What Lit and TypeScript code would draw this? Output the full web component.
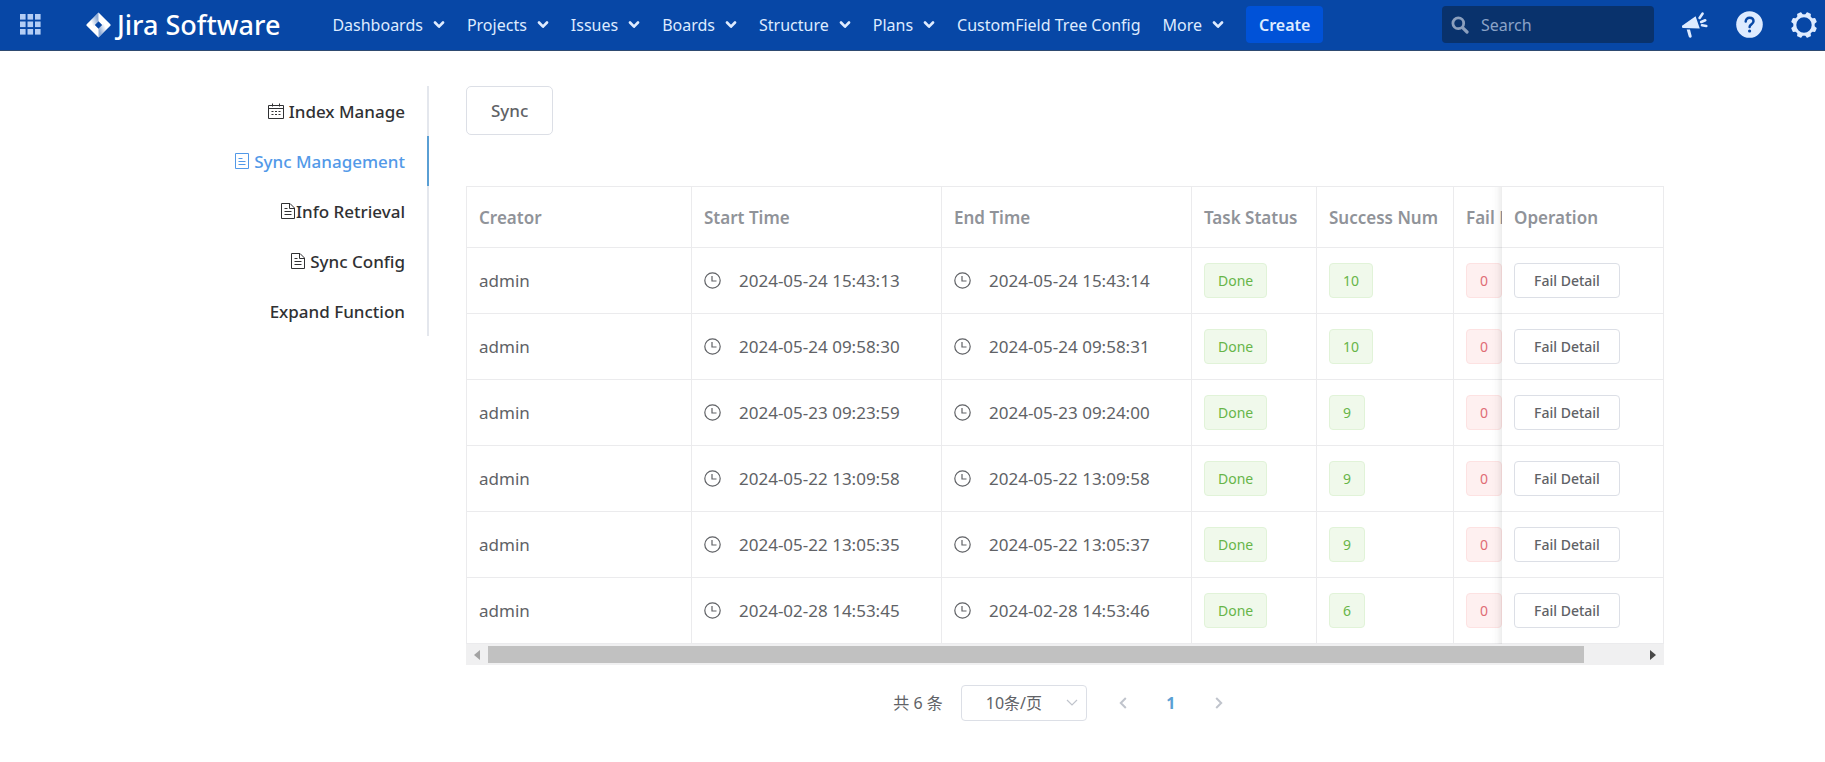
import { LitElement, html, css, svg } from "lit";
import { customElement, query } from "lit/decorators.js";

const FONT = css`"Noto Sans", "Noto Sans CJK SC", sans-serif`;

interface MenuItem {
  label: string;
  menu: boolean;
}

interface Task {
  creator: string;
  start: string;
  end: string;
  success: number;
  fail: number;
}

const MENU: MenuItem[] = [
  { label: "Dashboards", menu: true },
  { label: "Projects", menu: true },
  { label: "Issues", menu: true },
  { label: "Boards", menu: true },
  { label: "Structure", menu: true },
  { label: "Plans", menu: true },
  { label: "CustomField Tree Config", menu: false },
  { label: "More", menu: true },
];

const TASKS: Task[] = [
  { creator: "admin", start: "2024-05-24 15:43:13", end: "2024-05-24 15:43:14", success: 10, fail: 0 },
  { creator: "admin", start: "2024-05-24 09:58:30", end: "2024-05-24 09:58:31", success: 10, fail: 0 },
  { creator: "admin", start: "2024-05-23 09:23:59", end: "2024-05-23 09:24:00", success: 9, fail: 0 },
  { creator: "admin", start: "2024-05-22 13:09:58", end: "2024-05-22 13:09:58", success: 9, fail: 0 },
  { creator: "admin", start: "2024-05-22 13:05:35", end: "2024-05-22 13:05:37", success: 9, fail: 0 },
  { creator: "admin", start: "2024-02-28 14:53:45", end: "2024-02-28 14:53:46", success: 6, fail: 0 },
];

const chevron = html`<svg class="chevron" width="12" height="8" viewBox="0 0 12 8" aria-hidden="true">
  <path d="M2 1.5 6 5.7 10 1.5" fill="none" stroke="currentColor" stroke-width="2.6" stroke-linecap="round" stroke-linejoin="round" />
</svg>`;

const GRID = [0, 7.5, 15];
const GEAR = [0, 45, 90, 135, 180, 225, 270, 315];

@customElement("top-bar")
export class TopBar extends LitElement {
  static styles = css`
    :host {
      display: block;
      font-family: ${FONT};
    }
    * {
      box-sizing: border-box;
    }
    .bar {
      display: flex;
      align-items: center;
      height: 51px;
      padding: 0 8px 1px 20px;
      background: #0747a6;
      border-bottom: 1px solid #2e4a70;
      color: #deebff;
    }
    button {
      display: inline-flex;
      align-items: center;
      padding: 0;
      border: 0;
      background: none;
      color: inherit;
      font: inherit;
      cursor: pointer;
    }
    .logo {
      display: flex;
      align-items: center;
      gap: 6px;
      margin: 0 52px 0 45px;
      color: #fff;
      font-size: 27px;
      line-height: 32px;
      font-weight: 500;
      text-decoration: none;
      white-space: nowrap;
    }
    .menu {
      display: flex;
      align-items: center;
      gap: 22px;
      font-size: 16px;
      line-height: 24px;
      white-space: nowrap;
    }
    .menu button {
      gap: 10px;
    }
    .create {
      height: 37px;
      margin-left: 22px;
      padding: 0 13px;
      border-radius: 4px;
      background: #0052d8;
      font-size: 16px;
      font-weight: 600;
    }
    .tools {
      display: flex;
      align-items: center;
      gap: 28px;
      margin-left: auto;
    }
    .search {
      display: flex;
      align-items: center;
      gap: 12px;
      width: 212px;
      height: 37px;
      padding: 0 9px;
      border-radius: 4px;
      background: #09326c;
      color: #8b9fbd;
    }
    .search input {
      flex: 1;
      min-width: 0;
      padding: 0;
      border: 0;
      outline: 0;
      background: none;
      color: #deebff;
      font: inherit;
      font-size: 16px;
    }
    .search input::placeholder {
      color: #8ba3c7;
      opacity: 1;
    }
  `;

  render() {
    return html`
      <header class="bar">
        <button aria-label="Applications">
          <svg width="21" height="21" viewBox="0 0 21 21" fill="#b3cdf5">
            ${GRID.map((y) => GRID.map((x) => svg`<rect x=${x} y=${y} width="5.6" height="5.6" />`))}
          </svg>
        </button>
        <a class="logo" href="#">
          <svg width="25" height="26" viewBox="0 0 25 26" aria-hidden="true">
            <defs>
              <linearGradient id="fold-a" x1="0.9" y1="0.3" x2="0.2" y2="0.8">
                <stop offset="0.1" stop-color="#0747a6" stop-opacity="0.45" />
                <stop offset="0.9" stop-color="#0747a6" stop-opacity="0" />
              </linearGradient>
              <linearGradient id="fold-b" x1="0.1" y1="0.7" x2="0.8" y2="0.2">
                <stop offset="0.1" stop-color="#0747a6" stop-opacity="0.45" />
                <stop offset="0.9" stop-color="#0747a6" stop-opacity="0" />
              </linearGradient>
            </defs>
            <path
              d="M12.5.5 24.3 12.200a1.200 1.200 0 0 1 0 1.600L12.500 25.500.7 13.800a1.200 1.200 0 0 1 0-1.600ZM12.500 9.300 8.800 13l3.700 3.700 3.700-3.700Z"
              fill="#fff"
              fill-rule="evenodd"
            />
            <path d="M12.500.5v8.800L6.400 15.400 3.300 9.600Z" fill="url(#fold-a)" />
            <path d="M12.500 25.500v-8.800l6.100-6.100 3.100 5.800Z" fill="url(#fold-b)" />
          </svg>
          Jira Software
        </a>
        <nav class="menu">
          ${MENU.map((m) => html`<button>${m.label}${m.menu ? chevron : ""}</button>`)}
        </nav>
        <button class="create">Create</button>
        <div class="tools">
          <label class="search">
            <svg width="18" height="18" viewBox="0 0 18 18" fill="none" stroke="currentColor" stroke-linecap="round" aria-hidden="true">
              <circle cx="7.3" cy="7.3" r="5.4" stroke-width="2.8" />
              <path d="m11.8 11.8 4.2 4.2" stroke-width="3.2" />
            </svg>
            <input type="text" placeholder="Search" aria-label="Search" />
          </label>
          <button aria-label="Announcements">
            <svg width="26" height="26" viewBox="0 0 26 26" fill="currentColor">
              <path d="M13.6 4.2 17.8 16.4 1.6 15.9a1.2 1.2 0 0 1-.8-2.6Z" />
              <path d="M4.7 17.5 8 17.6 9.6 23.8a1.5 1.5 0 0 1-2.9.8Z" />
              <path d="m17.6 6 2.9-4.3M19.2 10l4-1.7M20 13.2l4.3.8" fill="none" stroke="currentColor" stroke-width="2.6" stroke-linecap="round" />
            </svg>
          </button>
          <button aria-label="Help">
            <svg width="27" height="27" viewBox="0 0 27 27">
              <circle cx="13.5" cy="13.5" r="13.3" fill="currentColor" />
              <path d="M9.7 10.6c0-2.3 1.600-3.900 3.900-3.900s3.900 1.500 3.900 3.600c0 2.900-3.900 3-3.900 5.700" fill="none" stroke="#0747a6" stroke-width="2.5" stroke-linecap="round" />
              <circle cx="13.6" cy="20" r="1.6" fill="#0747a6" />
            </svg>
          </button>
          <button aria-label="Settings">
            <svg width="26" height="26" viewBox="0 0 26 26">
              <circle cx="13" cy="13" r="9.2" fill="none" stroke="currentColor" stroke-width="3" />
              ${GEAR.map((a) => svg`<path d="M9.8 4 10.7.5Q10.800 0 11.300 0H14.700Q15.200 0 15.300.5L16.200 4Z" fill="currentColor" transform="rotate(${a + 22.5} 13 13)" />`)}
            </svg>
          </button>
        </div>
      </header>
    `;
  }
}

const calendarIcon = html`<svg width="16" height="16" viewBox="0 0 16 16" fill="none" stroke="currentColor" aria-hidden="true">
  <path d="M.5 2.5h15v13H.5ZM.5 5.5h15M4.5.5v3M11.5.5v3" />
  <path d="M3.5 8.5h9M3.5 11.5h9" stroke-dasharray="2 1.5" />
</svg>`;
const listIcon = html`<svg width="14" height="16" viewBox="0 0 14 16" fill="none" stroke="currentColor" aria-hidden="true">
  <path d="M.5.5h13v15H.5ZM3.5 5.5h4M3.5 8.5h7M3.5 11.5h7" />
</svg>`;
const docIcon = html`<svg width="14" height="16" viewBox="0 0 14 16" fill="none" stroke="currentColor" aria-hidden="true">
  <path d="M.5.5h8.5l4.5 4.5v10.5H.5ZM8.5.5v5h5M3.5 5.5h3M3.5 8.5h7M3.5 11.5h7" />
</svg>`;

const SIDE = [
  { label: "Index Manage", icon: calendarIcon, tight: false },
  { label: "Sync Management", icon: listIcon, tight: false },
  { label: "Info Retrieval", icon: docIcon, tight: true },
  { label: "Sync Config", icon: docIcon, tight: false },
  { label: "Expand Function", icon: null, tight: false },
];

@customElement("side-tabs")
export class SideTabs extends LitElement {
  static styles = css`
    :host {
      display: block;
      font-family: ${FONT};
    }
    .tabs {
      display: flex;
      flex-direction: column;
    }
    .tab {
      display: flex;
      align-items: center;
      justify-content: flex-end;
      gap: 5px;
      height: 50px;
      padding-right: 22px;
      border-right: 2px solid #e4e7ed;
      color: #303133;
      font-size: 17px;
      font-weight: 500;
      text-decoration: none;
    }
    .tight {
      gap: 1px;
    }
    .active {
      border-right-color: #5a9fd4;
      color: #5299e8;
    }
  `;

  render() {
    return html`<nav class="tabs">
      ${SIDE.map(
        (s, i) =>
          html`<a href="#" class="tab ${i === 1 ? "active" : ""} ${s.tight ? "tight" : ""}">${s.icon}<span>${s.label}</span></a>`
      )}
    </nav>`;
  }
}

const clock = html`<svg width="17" height="17" viewBox="0 0 17 17" fill="none" stroke="currentColor" stroke-width="1.2" aria-hidden="true">
  <circle cx="8.5" cy="8.5" r="7.7" />
  <path d="M8 4v5h4.5" />
</svg>`;

@customElement("task-table")
export class TaskTable extends LitElement {
  @query(".view") view!: HTMLElement;

  static styles = css`
    :host {
      display: block;
      font-family: ${FONT};
    }
    * {
      box-sizing: border-box;
    }
    .view {
      overflow: hidden;
      border: 1px solid #ebebed;
      border-bottom: 0;
    }
    table {
      width: 100%;
      min-width: 1262px;
      table-layout: fixed;
      border-collapse: separate;
      border-spacing: 0;
      color: #606266;
      font-size: 17px;
      line-height: 24px;
    }
    th,
    td {
      height: 66px;
      padding: 0 12px;
      border-right: 1px solid #ebebed;
      border-bottom: 1px solid #ebebed;
      text-align: left;
      white-space: nowrap;
    }
    th {
      height: 61px;
      padding-top: 2px;
      color: #909399;
      font-weight: 600;
    }
    .w-creator {
      width: 225px;
    }
    .w-time {
      width: 250px;
    }
    .w-status {
      width: 125px;
    }
    .w-success {
      width: 137px;
    }
    .w-fail {
      width: 114px;
    }
    .w-op {
      width: 161px;
    }
    .pinned {
      position: sticky;
      right: 0;
      border-right: 0;
      background: #fff;
    }
    .pinned::before {
      content: "";
      position: absolute;
      top: 0;
      bottom: -1px;
      left: -10px;
      width: 10px;
      background: linear-gradient(to left, rgba(0, 0, 0, 0.07), rgba(0, 0, 0, 0.02) 50%, rgba(0, 0, 0, 0));
    }
    .time {
      display: flex;
      align-items: center;
      gap: 18px;
    }
    .tag {
      display: inline-block;
      height: 35px;
      padding: 0 13px;
      border: 1px solid #e1f3d8;
      border-radius: 4px;
      background: #f0f9eb;
      color: #67b548;
      font-size: 14px;
      line-height: 33px;
      vertical-align: middle;
    }
    .danger {
      border-color: #fde2e2;
      background: #fef0f0;
      color: #e06c75;
    }
    .detail {
      display: block;
      width: 106px;
      height: 35px;
      padding: 0;
      border: 1px solid #dcdfe6;
      border-radius: 4px;
      background: #fff;
      color: #606266;
      font: inherit;
      font-size: 14px;
      font-weight: 500;
    }
    .scroll {
      display: flex;
      align-items: center;
      height: 21px;
      background: #f0f0f1;
    }
    .arrow {
      display: flex;
      align-items: center;
      justify-content: center;
      width: 22px;
      height: 21px;
      padding: 0;
      border: 0;
      background: none;
      color: #a3a3a3;
    }
    .next {
      color: #484848;
    }
    .track {
      flex: 1;
    }
    .thumb {
      width: 95%;
      height: 17px;
      background: #c1c1c1;
    }
  `;

  private scrollTable(dx: number) {
    this.view.scrollLeft += dx;
  }

  render() {
    return html`
      <div class="view">
        <table>
          <thead>
            <tr>
              <th class="w-creator">Creator</th>
              <th class="w-time">Start Time</th>
              <th class="w-time">End Time</th>
              <th class="w-status">Task Status</th>
              <th class="w-success">Success Num</th>
              <th class="w-fail">Fail Num</th>
              <th class="w-op pinned">Operation</th>
            </tr>
          </thead>
          <tbody>
            ${TASKS.map(
              (t) => html`<tr>
                <td>${t.creator}</td>
                <td><div class="time">${clock}<span>${t.start}</span></div></td>
                <td><div class="time">${clock}<span>${t.end}</span></div></td>
                <td><span class="tag">Done</span></td>
                <td><span class="tag">${t.success}</span></td>
                <td><span class="tag danger">${t.fail}</span></td>
                <td class="pinned"><button class="detail">Fail Detail</button></td>
              </tr>`
            )}
          </tbody>
        </table>
      </div>
      <div class="scroll">
        <button class="arrow" aria-label="Scroll left" @click=${() => this.scrollTable(-40)}>
          <svg width="6" height="10" viewBox="0 0 6 10"><path d="M6 0v10L0 5Z" fill="currentColor" /></svg>
        </button>
        <div class="track"><div class="thumb"></div></div>
        <button class="arrow next" aria-label="Scroll right" @click=${() => this.scrollTable(40)}>
          <svg width="6" height="10" viewBox="0 0 6 10"><path d="M0 0v10l6-5Z" fill="currentColor" /></svg>
        </button>
      </div>
    `;
  }
}

@customElement("page-nav")
export class PageNav extends LitElement {
  static styles = css`
    :host {
      display: flex;
      align-items: center;
      justify-content: center;
      padding-left: 6px;
      color: #606266;
      font-family: ${FONT};
      font-size: 16px;
      line-height: 24px;
    }
    .size {
      display: grid;
      align-items: center;
      width: 126px;
      height: 36px;
      margin: 0 12px 0 18px;
    }
    .size > * {
      grid-area: 1 / 1;
    }
    select {
      box-sizing: border-box;
      width: 100%;
      height: 100%;
      padding: 0 24px;
      appearance: none;
      border: 1px solid #dcdfe6;
      border-radius: 4px;
      background: #fff;
      color: #606266;
      font: inherit;
    }
    .down {
      justify-self: end;
      margin-right: 9px;
      pointer-events: none;
    }
    .pages {
      display: flex;
    }
    button {
      display: flex;
      align-items: center;
      justify-content: center;
      width: 48px;
      height: 36px;
      padding: 0;
      border: 0;
      background: none;
      color: #c0c4cc;
      font: inherit;
    }
    .current {
      color: #5a9fd4;
      font-weight: 700;
      font-size: 16px;
    }
  `;

  render() {
    return html`
      <span>共 6 条</span>
      <label class="size">
        <select aria-label="条/页">
          <option>10条/页</option>
        </select>
        <svg class="down" width="12" height="8" viewBox="0 0 12 8"><path d="m1 1 5 5 5-5" fill="none" stroke="#c0c4cc" stroke-width="1.2" /></svg>
      </label>
      <div class="pages">
        <button aria-label="Previous page">
          <svg width="8" height="12" viewBox="0 0 8 12"><path d="M6.8 1 1.8 6l5 5" fill="none" stroke="currentColor" stroke-width="2" /></svg>
        </button>
        <button class="current">1</button>
        <button aria-label="Next page">
          <svg width="8" height="12" viewBox="0 0 8 12"><path d="m1.2 1 5 5-5 5" fill="none" stroke="currentColor" stroke-width="2" /></svg>
        </button>
      </div>
    `;
  }
}

@customElement("app-root")
export class AppRoot extends LitElement {
  static styles = css`
    :host {
      display: block;
      min-height: 100vh;
      background: #fff;
      font-family: ${FONT};
    }
    .layout {
      display: grid;
      grid-template-columns: 268px minmax(0, 1fr);
      gap: 37px;
      align-items: start;
      padding: 35px 161px;
    }
    .sync {
      display: block;
      height: 49px;
      margin-bottom: 51px;
      padding: 0 24px;
      border: 1px solid #dcdfe6;
      border-radius: 5px;
      background: #fff;
      color: #606266;
      font: inherit;
      font-size: 17px;
      font-weight: 500;
    }
    .pager {
      margin-top: 20px;
    }
  `;

  render() {
    return html`
      <top-bar></top-bar>
      <div class="layout">
        <side-tabs></side-tabs>
        <main>
          <button class="sync">Sync</button>
          <task-table></task-table>
          <page-nav class="pager"></page-nav>
        </main>
      </div>
    `;
  }
}
